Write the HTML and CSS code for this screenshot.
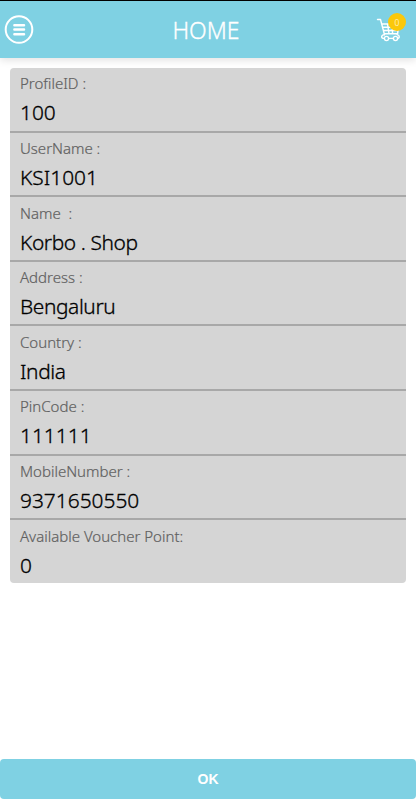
FILE: index.html
```html
<!DOCTYPE html>
<html lang="en">
<head>
  <meta charset="UTF-8">
  <meta name="viewport" content="width=device-width, initial-scale=1.0">
  <title>Home</title>
  <link rel="stylesheet" href="styles.css">
</head>
<body>
  <header class="topbar">
    <button type="button" class="icon-btn" aria-label="Menu">
      <svg width="30" height="30" viewBox="0 0 30 30" fill="none" stroke="#fff">
        <circle cx="15" cy="14.5" r="13.3" stroke-width="2"/>
        <path d="M10.4 10.2h9.6M10.4 14.6h9.6M10.4 19.2h9.6" stroke-width="2.5" stroke-linecap="round"/>
      </svg>
    </button>
    <h1>HOME</h1>
    <button type="button" class="icon-btn cart" aria-label="Cart">
      <svg width="26" height="26" viewBox="0 0 26 26" fill="none" stroke="#fff" stroke-width="1.4" stroke-linecap="round" stroke-linejoin="round">
        <path d="M1.5 2.5h3l4 15.2M5.8 7h17l-1.2 9.8L8.3 16.6M7 10.3h15M8 13.5h14M11.5 7l1.5 9.6M16 7l.6 9.6"/>
        <path d="M8.5 17.6c-4 .6-3.4 3.8-.6 3.8M12 21.4h5.8M21 17.6c3 .6 3 3.8 0 3.8"/>
        <circle cx="10.5" cy="21.5" r="2.1" fill="#7fd1e3"/>
        <circle cx="19.5" cy="21.5" r="2.1" fill="#7fd1e3"/>
      </svg>
      <span class="badge">0</span>
    </button>
  </header>

  <main>
    <dl class="profile">
      <div class="row"><dt>ProfileID :</dt><dd>100</dd></div>
      <div class="row"><dt>UserName :</dt><dd>KSI1001</dd></div>
      <div class="row"><dt>Name&nbsp; :</dt><dd class="text">Korbo . Shop</dd></div>
      <div class="row"><dt>Address :</dt><dd class="text">Bengaluru</dd></div>
      <div class="row"><dt>Country :</dt><dd class="text">India</dd></div>
      <div class="row"><dt>PinCode :</dt><dd>111111</dd></div>
      <div class="row"><dt>MobileNumber :</dt><dd>9371650550</dd></div>
      <div class="row"><dt>Available Voucher Point:</dt><dd>0</dd></div>
    </dl>
  </main>

  <button type="button" class="ok-btn">OK</button>
</body>
</html>
```
FILE: styles.css
```css
* {
  box-sizing: border-box;
}

body {
  display: flex;
  flex-direction: column;
  height: 100vh;
  margin: 0;
  background: #fff;
  font-family: "Noto Sans", sans-serif;
}

.topbar {
  display: flex;
  align-items: center;
  justify-content: space-between;
  height: 58px;
  padding: 0 10px 0 4px;
  border-top: 1px solid #000;
  background: #7fd1e3;
  box-shadow: 0 2px 8px rgba(0, 0, 0, 0.12);
}

.topbar h1 {
  margin: 0 0 0 2px;
  color: #fff;
  font-size: 23px;
  font-weight: 300;
  line-height: 30px;
  -webkit-text-stroke: 0.3px #fff;
}

.icon-btn {
  position: relative;
  width: 30px;
  height: 30px;
  padding: 0;
  border: none;
  background: none;
}

.icon-btn svg {
  display: block;
}

.badge {
  position: absolute;
  top: -2px;
  right: 0;
  width: 18px;
  height: 18px;
  border-radius: 50%;
  background: #fbc80b;
  color: #fff;
  font-family: "Noto Sans", sans-serif;
  font-size: 8.5px;
  font-weight: 300;
  line-height: 19px;
  text-align: center;
}

main {
  flex: 1;
  padding: 10px;
}

.profile {
  margin: 0;
  border-radius: 4px;
  background: #d5d5d5;
}

.row {
  height: 64.6px;
  padding: 4.4px 10px 0;
  border-bottom: 2px solid #a8a8a8;
}

.row:last-child {
  height: 62.8px;
  border-bottom: none;
}

dt {
  color: #606060;
  font-size: 15px;
  font-weight: 300;
  line-height: 22px;
  -webkit-text-stroke: 0.2px #606060;
}

dd {
  margin: 0;
  color: #000;
  font-size: 20.9px;
  font-weight: 300;
  line-height: 36px;
  -webkit-text-stroke: 0.3px #000;
}

dd.text {
  letter-spacing: -0.4px;
}

.ok-btn {
  height: 40px;
  margin-bottom: 1px;
  padding: 0;
  border: none;
  border-radius: 4px;
  background: #7fd1e3;
  color: #fff;
  font-family: "Liberation Sans", Arial, sans-serif;
  font-size: 14px;
  font-weight: 700;
}
```
